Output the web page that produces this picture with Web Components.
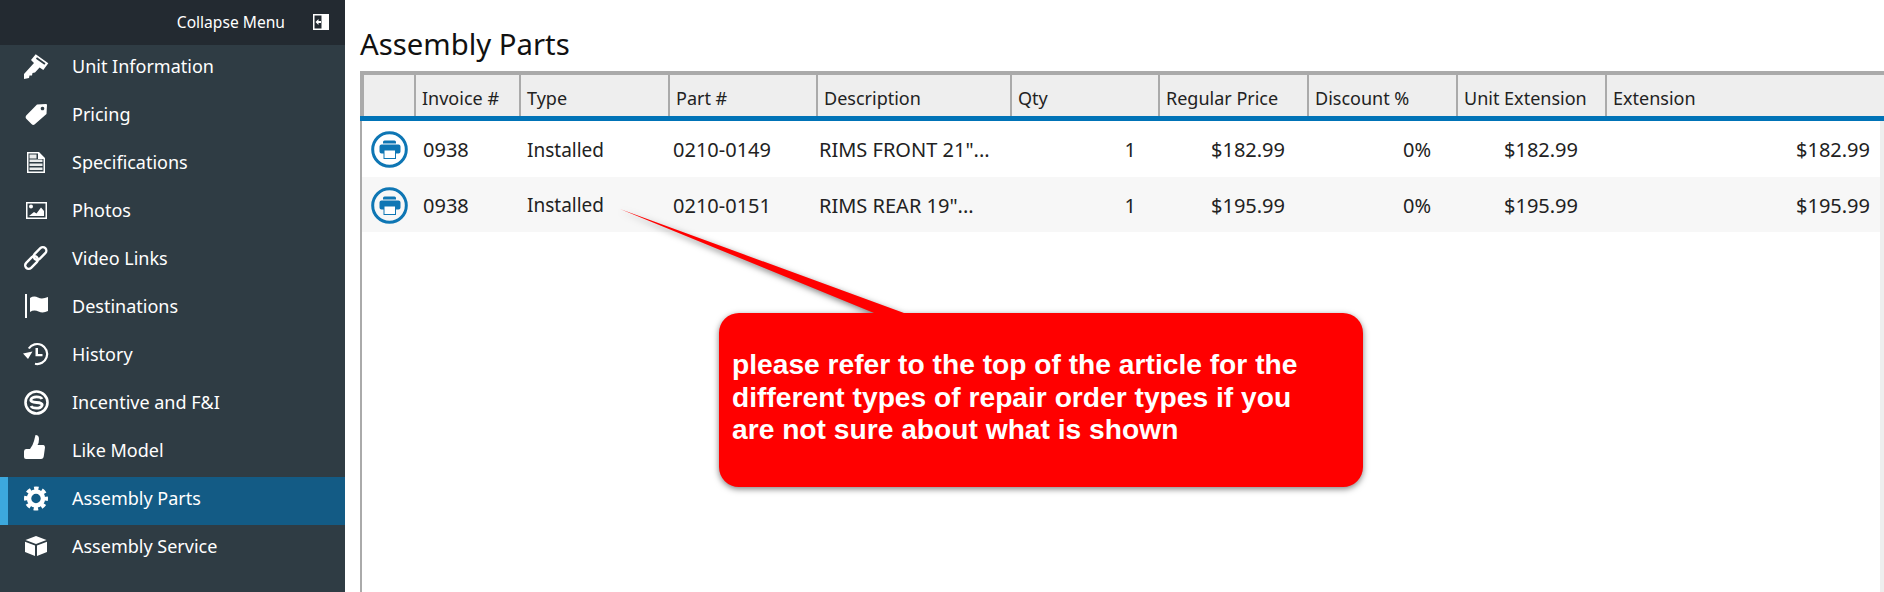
<!DOCTYPE html>
<html>
<head>
<meta charset="utf-8">
<title>Assembly Parts</title>
<style>
    html, body { margin: 0; height: 100%; overflow: hidden; background: #fff; }
    body { font-family: "Noto Sans", "Open Sans", sans-serif; }
    svg.i { width: 28px; height: 28px; display: block; overflow: visible; fill: #fff; }
</style>
</head>
<body>
<app-shell>
    <side-menu slot="menu">
        <nav-item label="Unit Information">
            <svg class="i" viewBox="0 0 28 28"><path fill-rule="evenodd" d="M13.7 2.3 26.3 11.3 21.3 18 17.6 15.4 13 20.5 10.5 21 10 23.5 7.5 23.5 7 26 2 27 2 22 12 11 9 8ZM15 5.2 13.9 6.7 22.4 12.8 23.5 11.3Z"/></svg>
        </nav-item>
        <nav-item label="Pricing">
            <svg class="i" viewBox="0 0 28 28"><path fill-rule="evenodd" d="M15 4.5 24 4Q25 4 25 5L24.5 14 12.5 24.5Q11 25.5 9.5 24L4 18.5Q3 17 4.2 15.5ZM20.5 6.7a1.8 1.8 0 1 0 .01 0Z"/></svg>
        </nav-item>
        <nav-item label="Specifications">
            <svg class="i" viewBox="0 0 28 28"><path fill-rule="evenodd" d="M5 4H17L23 10V25H5ZM6.5 5.5V23.5H21.5V11H16V5.5Z"/><path d="M7.500 11.500H20.500V14H7.500ZM7.500 15.500H20.500V18H7.500ZM7.500 19.500H20.500V22H7.500ZM7.500 6.500H14.500V10.500H7.500Z" opacity=".9"/></svg>
        </nav-item>
        <nav-item label="Photos">
            <svg class="i" viewBox="0 0 28 28"><path fill-rule="evenodd" d="M4 6H25V23H4ZM5.500 7.500V21.500H23.500V7.500Z"/><circle cx="9" cy="10.500" r="2"/><path d="M7 20 12 16 14.500 17.500 19 11.500 22 15V20Z"/></svg>
        </nav-item>
        <nav-item label="Video Links">
            <svg class="i" viewBox="0 0 28 28" style="fill:none;stroke:#fff;stroke-width:2.4"><rect x="-7.500" y="-3.500" width="15" height="7" rx="3.500" transform="translate(9.500 18.500) rotate(-45)"/><rect x="-7.500" y="-3.500" width="15" height="7" rx="3.500" transform="translate(18 9.500) rotate(-45)"/></svg>
        </nav-item>
        <nav-item label="Destinations">
            <svg class="i" viewBox="0 0 28 28"><path d="M3 2H5V26H3ZM8 6Q12 3.500 16 5.500T26 5V19Q21 21.500 16.500 19.500T8 20Z"/></svg>
        </nav-item>
        <nav-item label="History">
            <svg class="i" viewBox="0 0 28 28"><path d="M6.800 8.500A10 10 0 1 1 13 23.800" fill="none" stroke="#fff" stroke-width="2.200"/><path d="M1 13.500 10.500 11.500 6 19ZM13.500 8H16V14H20.500V16.300H13.500Z"/></svg>
        </nav-item>
        <nav-item label="Incentive and F&amp;I">
            <svg class="i" viewBox="0 0 28 28"><circle cx="14.500" cy="14.500" r="11" fill="none" stroke="#fff" stroke-width="2.600"/><path d="M20 11Q19 8.800 14.500 8.800T9 11.500 14.500 14.500 20 17.500 14.500 20.200 9 18" fill="none" stroke="#fff" stroke-width="2.800"/></svg>
        </nav-item>
        <nav-item label="Like Model">
            <svg class="i" viewBox="0 0 28 28"><path d="M2 15.500Q2 13 4 13H8Q11 9 12 5T13.500 -1Q17 -1 17 3T15.500 9H21.500Q23 9 23 11.500L21.800 20Q21.500 23 19 23H4Q2 23 2 21Z"/></svg>
        </nav-item>
        <nav-item label="Assembly Parts" active>
            <svg class="i" viewBox="0 0 28 28" style="fill:none;stroke:#fff"><circle cx="14" cy="14.500" r="7" stroke-width="4.500"/><circle cx="14" cy="14.500" r="10" stroke-width="4" stroke-dasharray="4.400 3.454" stroke-dashoffset="2.200"/></svg>
        </nav-item>
        <nav-item label="Assembly Service">
            <svg class="i" viewBox="0 0 28 28"><path d="M14 4 24.500 8 14 12 3.500 8ZM3 9.800 13 13.600V24L3 20ZM25 9.800 15 13.600V24L25 20Z"/></svg>
        </nav-item>
    </side-menu>

    <h-title>Assembly Parts</h-title>
    <parts-table>
        <parts-row invoice="0938" type="Installed" part="0210-0149" desc='RIMS FRONT 21"...' qty="1" price="$182.99" discount="0%" unit="$182.99" ext="$182.99"></parts-row>
        <parts-row invoice="0938" type="Installed" part="0210-0151" desc='RIMS REAR 19"...' qty="1" price="$195.99" discount="0%" unit="$195.99" ext="$195.99"></parts-row>
    </parts-table>

    <callout-note slot="over">please refer to the top of the article for the<br>different types of repair order types if you<br>are not sure about what is shown</callout-note>
</app-shell>

<script>
const define = (name, html, attrs) => {
    customElements.define(name, class extends HTMLElement {
        constructor() {
            super()
            this.attachShadow({ mode: 'open' }).innerHTML = html
            for (const a of attrs || []) {
                const el = this.shadowRoot.querySelector('[data-f="' + a + '"]')
                if (el) el.textContent = this.getAttribute(a)
            }
        }
    })
}

define('app-shell', `
<style>
    :host { display: flex; width: 1884px; height: 592px; position: relative; overflow: hidden; }
    main { flex: 1; min-width: 0; padding-left: 15px; display: flex; flex-direction: column; }
</style>
<slot name="menu"></slot>
<main><slot></slot></main>
<slot name="over"></slot>
`)

define('side-menu', `
<style>
    :host { display: block; width: 345px; flex: none; background: #2f3c44; color: #fff; }
    header { height: 45px; box-sizing: border-box; background: #232a31; display: flex; align-items: center; justify-content: flex-end; padding: 0 16px 1px 0; gap: 28px; font-size: 15.600px; }
    svg { display: block; width: 16px; height: 16px; }
</style>
<header>
    <span>Collapse Menu</span>
    <svg viewBox="0 0 16 16"><path fill="#fff" fill-rule="evenodd" d="M0 0H16V16H0ZM1.500 1.500V14.500H8.500V1.500Z"/><path fill="#fff" d="M2.500 8 5.500 5V7H8V9H5.500V11Z"/></svg>
</header>
<slot></slot>
`)

define('nav-item', `
<style>
    :host { display: flex; align-items: center; height: 48px; box-sizing: border-box; padding: 0 0 6px 22px; font-size: 18px; color: #fff; }
    :host([active]) { background: #135b85; box-shadow: inset 8px 0 0 #3ca8dd; }
    .icon { width: 28px; flex: none; }
    .label { margin-left: 22px; white-space: nowrap; }
</style>
<div class="icon"><slot></slot></div>
<div class="label" data-f="label"></div>
`, ['label'])

define('h-title', `
<style>
    :host { display: block; height: 71px; box-sizing: border-box; padding-top: 22px; font-size: 29.300px; line-height: 44px; color: #111; white-space: nowrap; }
</style>
<slot></slot>
`)

const COLS = '50px 105px 149px 148px 194px 148px 149px 149px 149px 1fr'

define('parts-table', `
<style>
    :host { display: block; flex: 1; }
    .head { display: grid; grid-template-columns: ${COLS}; height: 45px; box-sizing: border-box; border-top: 4px solid #aaa; border-left: 4px solid #aaa; background: #eee; font-size: 18px; color: #222; }
    .head div { border-left: 2px solid #aaa; padding: 6px 0 0 6px; line-height: 34px; white-space: nowrap; }
    .head div:first-child { border-left: 0; }
    .bar { height: 5px; background: #0073b7; }
    .body { height: 471px; border-left: 2px solid #aaa; border-right: 4px solid #eee; }
</style>
<div class="head">
    <div></div><div>Invoice #</div><div>Type</div><div>Part #</div><div>Description</div><div>Qty</div><div>Regular Price</div><div>Discount %</div><div>Unit Extension</div><div>Extension</div>
</div>
<div class="bar"></div>
<div class="body"><slot></slot></div>
`)

define('parts-row', `
<style>
    :host { display: grid; grid-template-columns: 53px 105px 149px 148px 194px 148px 149px 149px 149px 1fr; height: 55.500px; box-sizing: border-box; padding-top: 2px; align-items: center; font-size: 20px; color: #222; white-space: nowrap; }
    :host(:nth-child(even)) { background: #f7f7f7; }
    svg { display: block; width: 37px; height: 37px; margin-left: 8.500px; }
    .i { padding-left: 8px; } .t { padding-left: 7px; font-size: 19px; } .p { padding-left: 4px; } .d { padding-left: 2px; }
    .r { text-align: right; }
    .q, .m { padding-right: 23px; } .c { padding-right: 26px; } .u { padding-right: 28px; } .e { padding-right: 10px; }
</style>
<svg viewBox="0 0 37 37">
    <circle cx="18.500" cy="18.500" r="16.800" fill="none" stroke="#0e76b4" stroke-width="3"/>
    <path fill="#0e76b4" d="M12 12.500V11Q12 9.500 13.500 9.500H23.500Q25 9.500 25 11V12.500ZM10.500 13.500H27.500Q29.500 13.500 29.500 15.500V20.500Q29.500 22.500 27.500 22.500H10.500Q8.500 22.500 8.500 20.500V15.500Q8.500 13.500 10.500 13.500Z"/>
    <rect x="13" y="19" width="11.500" height="8.500" fill="#fff" stroke="#0e76b4"/>
</svg>
<div class="i" data-f="invoice"></div>
<div class="t" data-f="type"></div>
<div class="p" data-f="part"></div>
<div class="d" data-f="desc"></div>
<div class="r q" data-f="qty"></div>
<div class="r m" data-f="price"></div>
<div class="r c" data-f="discount"></div>
<div class="r u" data-f="unit"></div>
<div class="r e" data-f="ext"></div>
`, ['invoice', 'type', 'part', 'desc', 'qty', 'price', 'discount', 'unit', 'ext'])

define('callout-note', `
<style>
    :host { position: absolute; left: 620px; top: 209px; width: 744px; height: 279px; display: block; }
    svg { position: absolute; inset: 0; width: 744px; height: 279px; overflow: visible; filter: drop-shadow(0 2px 3px rgba(0,0,0,.5)); }
    p { position: absolute; left: 112px; top: 139px; margin: 0; font: bold 28.200px/32.500px "Liberation Sans", Arial, sans-serif; color: #fff; white-space: nowrap; }
</style>
<svg viewBox="0 0 744 279"><path fill="#f00" d="M0 0 284 104H723A20 20 0 0 1 743 124V258A20 20 0 0 1 723 278H119A20 20 0 0 1 99 258V124A20 20 0 0 1 119 104H254Z"/></svg>
<p><slot></slot></p>
`)
</script>
</body>
</html>
